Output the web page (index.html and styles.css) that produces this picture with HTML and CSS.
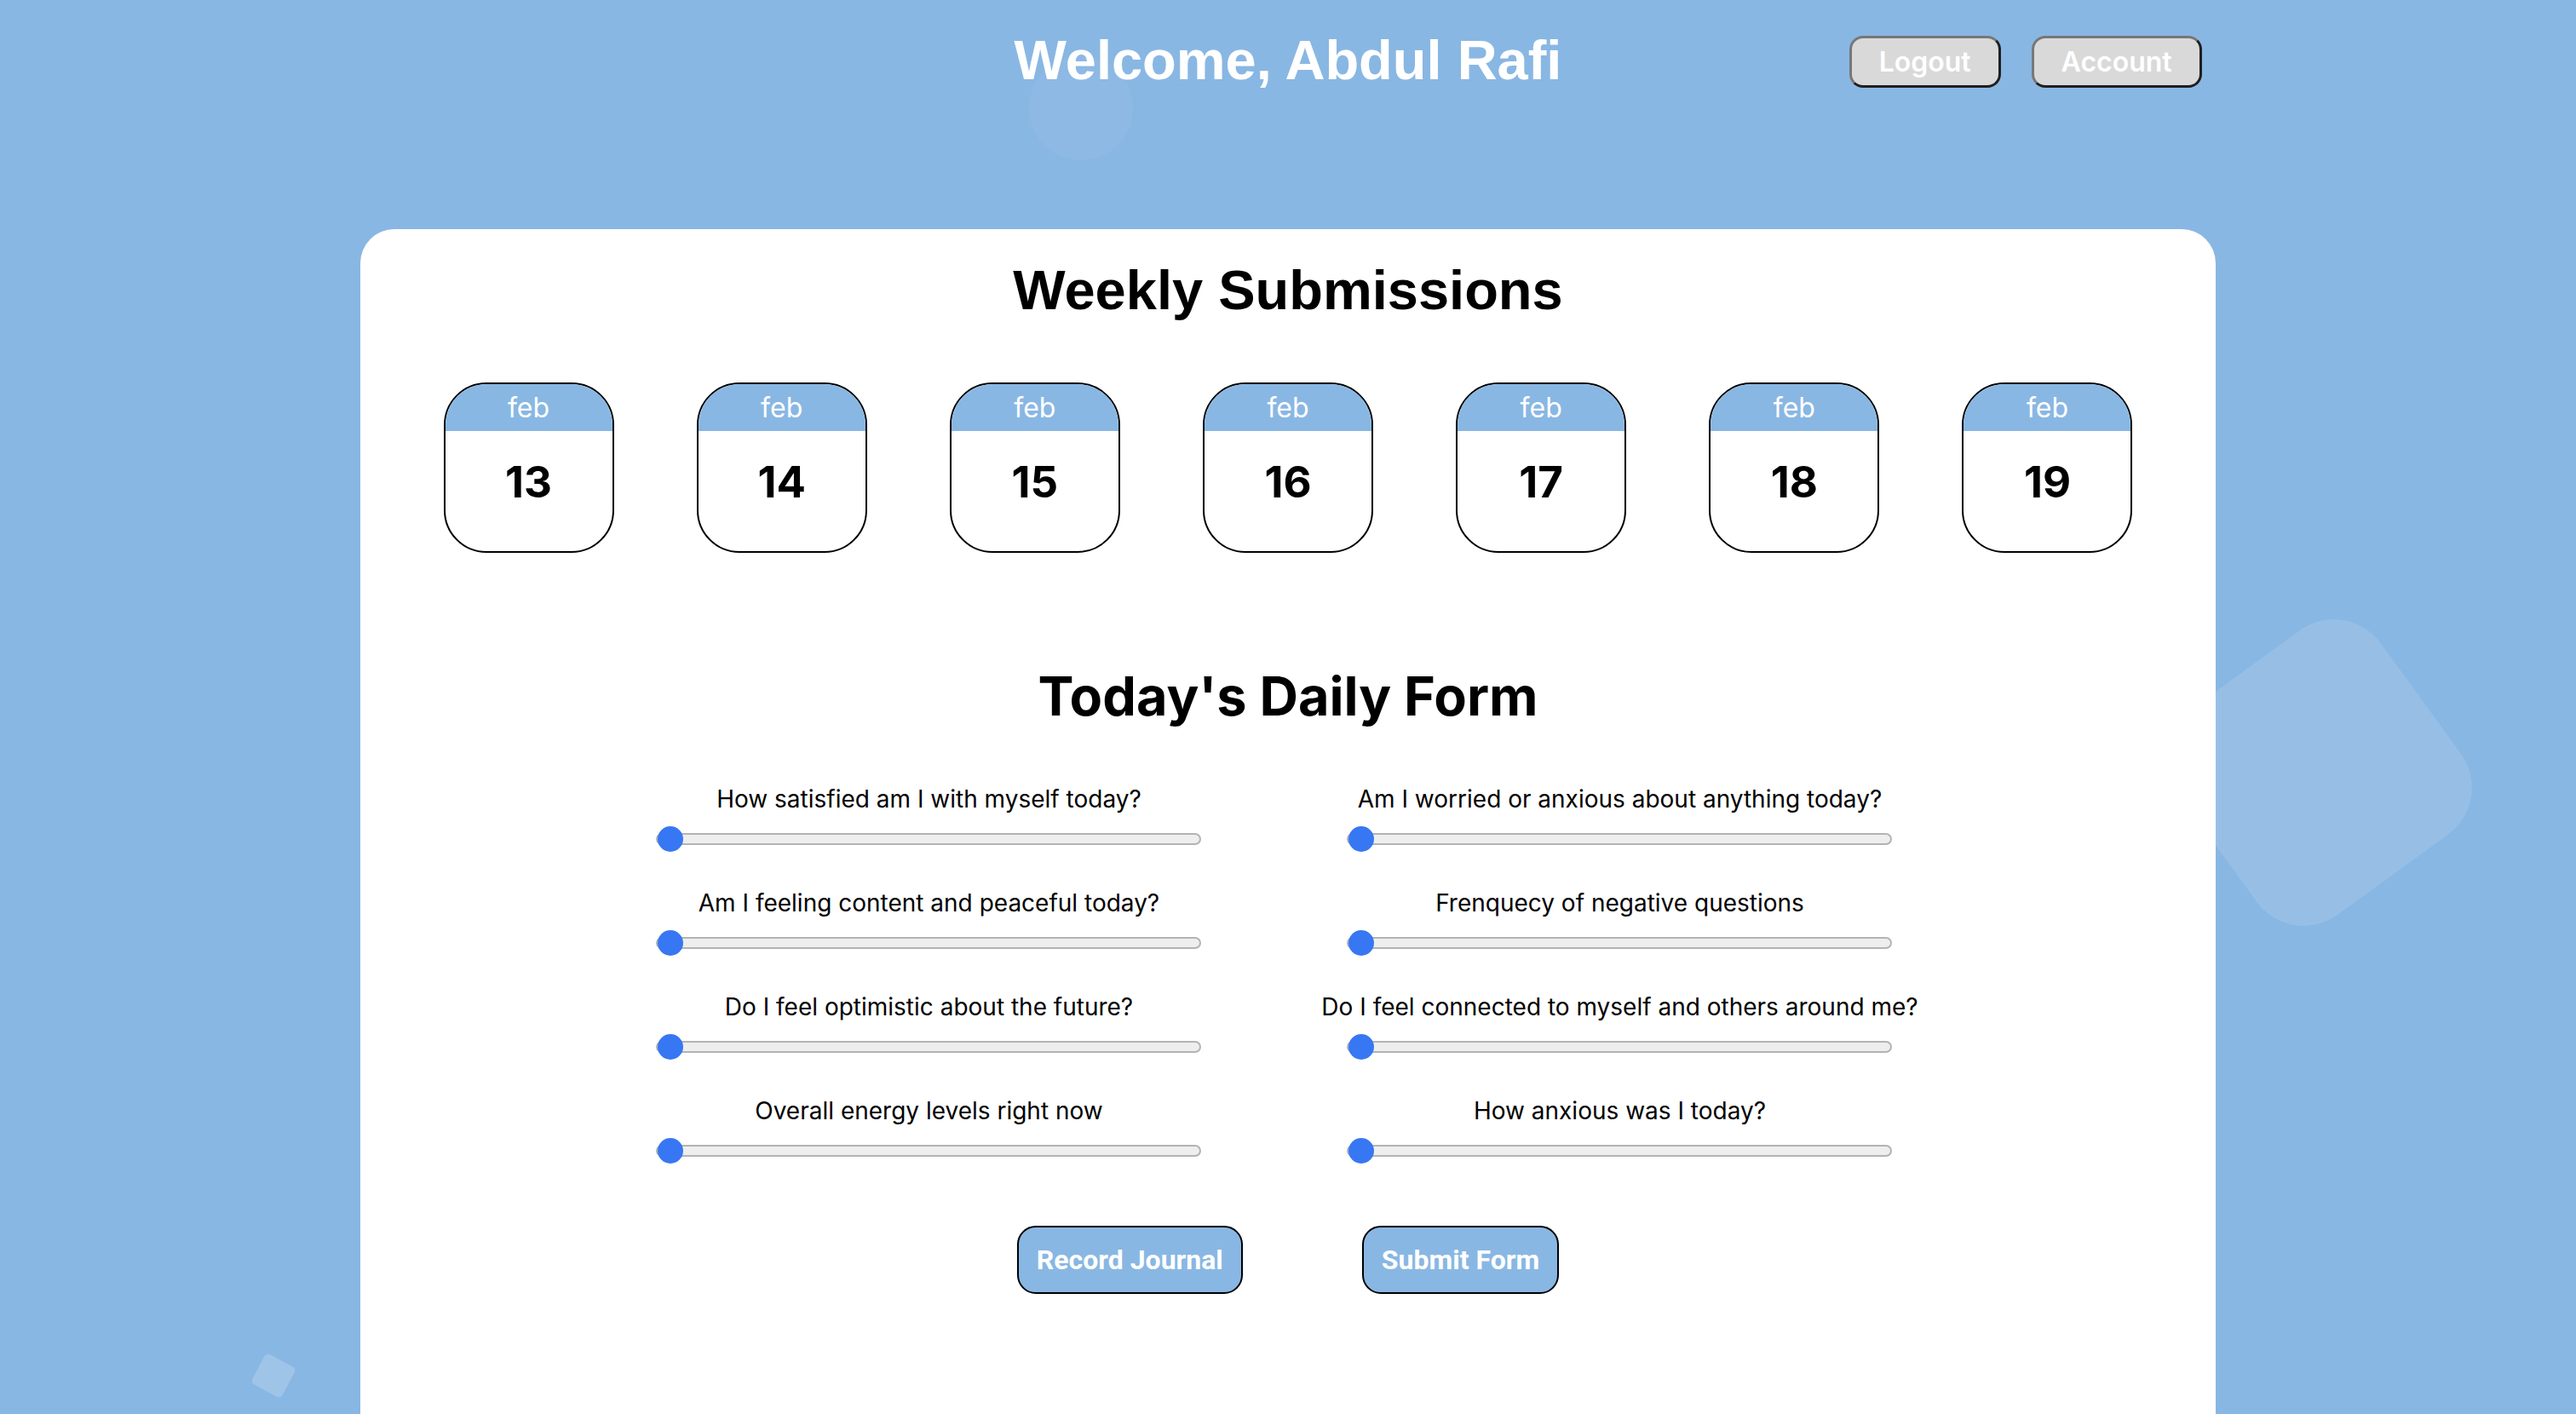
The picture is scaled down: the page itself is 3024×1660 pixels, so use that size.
FILE: index.html
```html
<!DOCTYPE html>
<html lang="en">
<head>
<meta charset="utf-8">
<title>Daily Form</title>
<link rel="stylesheet" href="styles.css">
</head>
<body>
  <div class="bg-shapes" aria-hidden="true">
    <span class="shape shape-circle"></span>
    <span class="shape shape-big"></span>
    <span class="shape shape-small"></span>
  </div>

  <header class="topbar">
    <div class="topbar-spacer"></div>
    <h1 class="welcome">Welcome, Abdul Rafi</h1>
    <nav class="actions">
      <button class="nav-btn" type="button">Logout</button>
      <button class="nav-btn" type="button">Account</button>
    </nav>
  </header>

  <main class="panel">
    <h2 class="title title-weekly">Weekly Submissions</h2>
    <div class="week">
      <div class="day"><div class="day-month">feb</div><div class="day-num">13</div></div>
      <div class="day"><div class="day-month">feb</div><div class="day-num">14</div></div>
      <div class="day"><div class="day-month">feb</div><div class="day-num">15</div></div>
      <div class="day"><div class="day-month">feb</div><div class="day-num">16</div></div>
      <div class="day"><div class="day-month">feb</div><div class="day-num">17</div></div>
      <div class="day"><div class="day-month">feb</div><div class="day-num">18</div></div>
      <div class="day"><div class="day-month">feb</div><div class="day-num">19</div></div>
    </div>

    <h2 class="title title-daily">Today's Daily Form</h2>
    <form class="daily-form">
      <div class="questions">
        <label class="q"><span class="q-text">How satisfied am I with myself today?</span><input class="range" type="range" min="0" max="10" value="0"></label>
        <label class="q"><span class="q-text">Am I worried or anxious about anything today?</span><input class="range" type="range" min="0" max="10" value="0"></label>
        <label class="q"><span class="q-text">Am I feeling content and peaceful today?</span><input class="range" type="range" min="0" max="10" value="0"></label>
        <label class="q"><span class="q-text">Frenquecy of negative questions</span><input class="range" type="range" min="0" max="10" value="0"></label>
        <label class="q"><span class="q-text">Do I feel optimistic about the future?</span><input class="range" type="range" min="0" max="10" value="0"></label>
        <label class="q"><span class="q-text">Do I feel connected to myself and others around me?</span><input class="range" type="range" min="0" max="10" value="0"></label>
        <label class="q"><span class="q-text">Overall energy levels right now</span><input class="range" type="range" min="0" max="10" value="0"></label>
        <label class="q"><span class="q-text">How anxious was I today?</span><input class="range" type="range" min="0" max="10" value="0"></label>
      </div>
      <div class="form-actions">
        <button class="form-btn" type="button">Record Journal</button>
        <button class="form-btn" type="submit">Submit Form</button>
      </div>
    </form>
  </main>
</body>
</html>
```
FILE: styles.css
```css
html, body {
  margin: 0;
  padding: 0;
  height: 100%;
  overflow: hidden;
}

body {
  background: #89b7e3;
  font-family: "Inter", "Noto Sans", sans-serif;
  position: relative;
}

/* decorative background shapes */
.bg-shapes {
  position: absolute;
  inset: 0;
  z-index: 0;
  pointer-events: none;
}

.shape {
  position: absolute;
  display: block;
}

.shape-circle {
  left: 1208px;
  top: 66px;
  width: 122px;
  height: 122px;
  border-radius: 50%;
  background: rgba(255, 255, 255, 0.04);
}

.shape-big {
  left: 2574px;
  top: 759px;
  width: 296px;
  height: 296px;
  border-radius: 68px;
  transform: rotate(-36deg);
  background: rgba(255, 255, 255, 0.12);
}

.shape-small {
  left: 301px;
  top: 1595px;
  width: 40px;
  height: 40px;
  border-radius: 5px;
  transform: rotate(28deg);
  background: rgba(255, 255, 255, 0.18);
}

/* header */
.topbar {
  position: relative;
  z-index: 1;
  width: 72%;
  margin: 0 auto;
  padding-top: 33px;
  display: grid;
  grid-template-columns: 1fr auto 1fr;
  align-items: start;
}

.welcome {
  margin: 0;
  font-family: "Liberation Sans", Arial, sans-serif;
  font-weight: 700;
  font-size: 65px;
  line-height: normal;
  color: #ffffff;
  text-align: center;
}

.actions {
  justify-self: end;
  margin-top: 9px;
  margin-right: 16px;
  display: flex;
  gap: 36px;
}

.nav-btn {
  font-family: "Inter", sans-serif;
  font-weight: 600;
  font-size: 32px;
  line-height: normal;
  color: #ffffff;
  background: #d9d9d9;
  border: 3px solid;
  border-color: #777777 #1f1f1f #1f1f1f #777777;
  border-radius: 16px;
  padding: 8px 32px;
  cursor: pointer;
}

/* white panel */
.panel {
  position: relative;
  z-index: 1;
  width: 72%;
  margin: 161px auto 0;
  background: #ffffff;
  border-radius: 40px 40px 0 0;
  padding: 34px 0 240px;
}

.title {
  margin: 0;
  text-align: center;
  color: #000000;
  font-weight: 700;
  line-height: normal;
}

.title-weekly {
  font-family: "Liberation Sans", Arial, sans-serif;
  font-size: 65px;
}

.title-daily {
  font-family: "Inter", sans-serif;
  font-size: 63px;
  margin-top: 130px;
}

/* week calendar */
.week {
  margin-top: 71px;
  display: flex;
  justify-content: space-evenly;
}

.day {
  width: 200px;
  height: 200px;
  box-sizing: border-box;
  border: 2px solid #000000;
  border-radius: 50px;
  overflow: hidden;
  background: #ffffff;
  text-align: center;
}

.day-month {
  height: 55px;
  box-sizing: border-box;
  padding-top: 8px;
  background: #89b7e3;
  color: #ffffff;
  font-size: 32px;
  line-height: normal;
}

.day-num {
  padding-top: 29px;
  font-size: 51px;
  font-weight: 700;
  line-height: normal;
  color: #000000;
}

/* daily form */
.daily-form {
  margin-top: 66px;
}

.questions {
  display: grid;
  grid-template-columns: 640px 640px;
  column-gap: 171px;
  row-gap: 43px;
  justify-content: center;
  padding-right: 32px;
}

.q {
  display: flex;
  flex-direction: column;
  align-items: center;
  gap: 15px;
}

.q-text {
  font-size: 28px;
  line-height: normal;
  color: #000000;
  white-space: nowrap;
}

.range {
  -webkit-appearance: none;
  appearance: none;
  display: block;
  width: 640px;
  height: 30px;
  margin: 0;
  padding: 0;
  background: transparent;
}

.range::-webkit-slider-runnable-track {
  box-sizing: border-box;
  height: 14px;
  border: 2px solid #b3b3b3;
  border-radius: 7px;
  background: #eeeeee;
}

.range::-webkit-slider-thumb {
  -webkit-appearance: none;
  appearance: none;
  width: 30px;
  height: 30px;
  margin-top: -10px;
  border: none;
  border-radius: 50%;
  background: #3777f3;
}

.form-actions {
  margin-top: 73px;
  display: flex;
  justify-content: center;
  gap: 140px;
}

.form-btn {
  font-family: "Roboto", sans-serif;
  font-weight: 700;
  font-size: 32px;
  line-height: normal;
  color: #ffffff;
  background: #89b7e3;
  border: 2px solid #000000;
  border-radius: 22px;
  padding: 19px 21px;
  cursor: pointer;
}
```
